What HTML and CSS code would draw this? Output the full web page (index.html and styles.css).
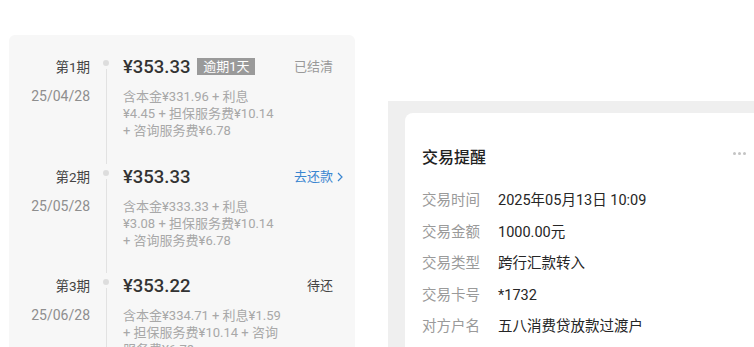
FILE: index.html
```html
<!DOCTYPE html>
<html lang="zh-CN">
<head>
  <meta charset="UTF-8">
  <title>还款计划 / 交易提醒</title>
  <link rel="stylesheet" href="styles.css">
</head>
<body>

  <div class="plan">
    <div class="period">
      <div class="p-no">第1期</div>
      <div class="rail"><span class="dot"></span><span class="line"></span></div>
      <div class="p-amount">¥353.33 <span class="overdue">逾期1天</span></div>
      <div class="p-status">已结清</div>
      <div class="p-date">25/04/28</div>
      <div class="p-detail">含本金¥331.96 + 利息<br>¥4.45 + 担保服务费¥10.14<br>+ 咨询服务费¥6.78</div>
    </div>

    <div class="period">
      <div class="p-no">第2期</div>
      <div class="rail"><span class="dot"></span><span class="line"></span></div>
      <div class="p-amount">¥353.33</div>
      <div class="p-status pay">去还款
        <svg class="chev" width="6" height="10" viewBox="0 0 6 10"><path d="M1 1l4 4-4 4" fill="none" stroke="currentColor" stroke-width="1.2"/></svg>
      </div>
      <div class="p-date">25/05/28</div>
      <div class="p-detail">含本金¥333.33 + 利息<br>¥3.08 + 担保服务费¥10.14<br>+ 咨询服务费¥6.78</div>
    </div>

    <div class="period">
      <div class="p-no">第3期</div>
      <div class="rail"><span class="dot"></span><span class="line"></span></div>
      <div class="p-amount">¥353.22</div>
      <div class="p-status todo">待还</div>
      <div class="p-date">25/06/28</div>
      <div class="p-detail">含本金¥334.71 + 利息¥1.59<br>+ 担保服务费¥10.14 + 咨询<br>服务费¥6.78</div>
    </div>
  </div>

  <div class="notice-wrap">
    <div class="notice">
      <div class="notice-head">
        <span class="notice-title">交易提醒</span>
        <span class="more"><i></i><i></i><i></i></span>
      </div>
      <div class="row"><span class="k">交易时间</span><span class="v">2025年05月13日 10:09</span></div>
      <div class="row"><span class="k">交易金额</span><span class="v">1000.00元</span></div>
      <div class="row"><span class="k">交易类型</span><span class="v">跨行汇款转入</span></div>
      <div class="row"><span class="k">交易卡号</span><span class="v">*1732</span></div>
      <div class="row"><span class="k">对方户名</span><span class="v">五八消费贷放款过渡户</span></div>
    </div>
  </div>

</body>
</html>
```

FILE: styles.css
```css
body {
  margin: 0;
  height: 347px;
  overflow: hidden;
  background: #fff;
  display: flex;
  align-items: flex-start;
  font-family: Roboto, "Noto Sans CJK SC", sans-serif;
  color: #333;
}

/* left: repayment plan */
.plan {
  width: 346px;
  margin: 35px 0 0 9px;
  padding-top: 19px;
  height: 293px;
  background: #f7f7f7;
  border-radius: 6px 6px 0 0;
  overflow: hidden;
}

.period {
  display: grid;
  grid-template-columns: 81px 32px 1fr auto;
  grid-template-rows: 26px auto;
}

.p-no {
  text-align: right;
  font-size: 13.5px;
  line-height: 26px;
  color: #444;
}

.rail {
  grid-row: span 2;
  display: flex;
  flex-direction: column;
  align-items: center;
}

.dot {
  width: 6px;
  height: 6px;
  margin-top: 6px;
  border-radius: 50%;
  background: #ddd;
}

.line {
  flex: 1;
  width: 1px;
  margin-top: 3px;
  background: #e2e2e2;
}

.p-amount {
  padding-left: 1px;
  font-size: 18.5px;
  line-height: 26px;
  font-weight: 500;
  color: #333;
}

.overdue {
  display: inline-block;
  margin-left: 2px;
  padding: 0 6px;
  font-size: 13px;
  line-height: 17px;
  font-weight: 400;
  color: #fff;
  background: #9a9a9a;
  vertical-align: 2px;
}

.p-status {
  padding-right: 22px;
  font-size: 13px;
  line-height: 26px;
  color: #999;
}

.p-status.pay {
  display: flex;
  align-items: center;
  gap: 4px;
  padding-right: 12px;
  color: #3b86d0;
}

.p-status.todo {
  color: #444;
}

.p-date {
  text-align: right;
  font-size: 14px;
  color: #8e8e8e;
  padding-top: 8px;
  line-height: 17px;
}

.p-detail {
  grid-column: 3 / 5;
  padding: 8px 0 24.5px 1px;
  font-size: 13px;
  line-height: 17px;
  color: #a8a8a8;
}

/* right: transaction notice */
.notice-wrap {
  flex: 1;
  margin: 101px 0 0 33px;
  height: 246px;
  padding: 12px 0 0 17px;
  background: #efefef;
  overflow: hidden;
}

.notice {
  width: 360px;
  height: 260px;
  padding: 26px 0 0 17px;
  background: #fff;
  border-radius: 8px;
}

.notice-head {
  display: flex;
  align-items: center;
  justify-content: space-between;
  width: 324px;
  height: 34px;
  margin-bottom: 16px;
}

.notice-title {
  font-size: 16px;
  font-weight: 500;
  color: #222;
}

.more {
  display: flex;
  gap: 2px;
  margin-top: -6px;
}

.more i {
  width: 3px;
  height: 3px;
  border-radius: 50%;
  background: #c4c4c4;
}

.row {
  display: flex;
  gap: 18px;
  height: 31.5px;
  line-height: 23px;
  font-size: 14.5px;
}

.k {
  color: #9a9a9a;
}

.v {
  color: #262626;
}
```
